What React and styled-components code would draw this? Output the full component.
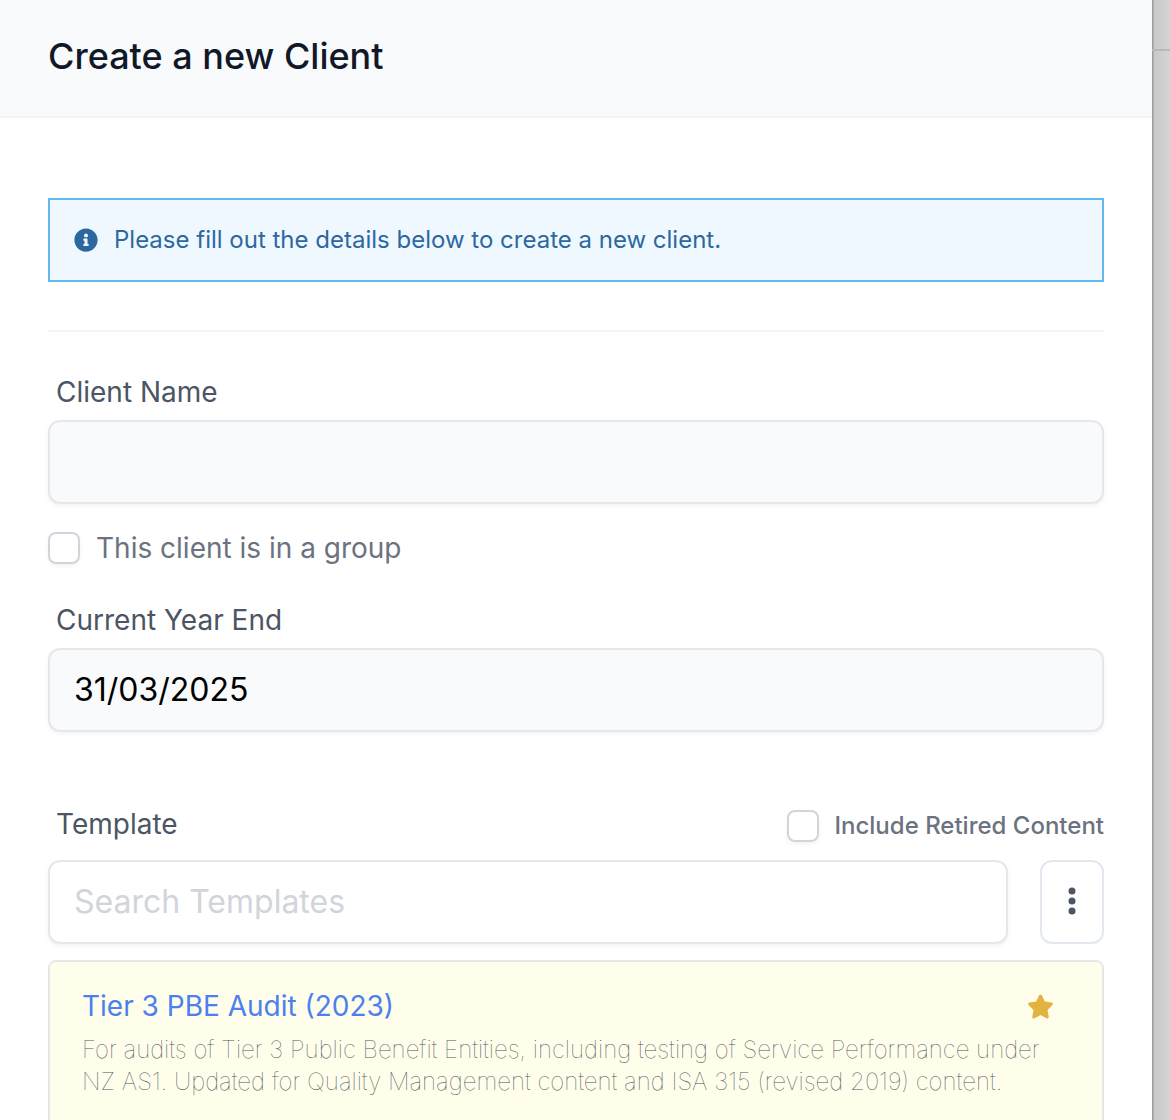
import React, {useState} from 'react';
import styled, {createGlobalStyle} from 'styled-components';
import {FaInfoCircle} from 'react-icons/fa';
import {FaStar} from 'react-icons/fa6';

const templates = [
  {
    id: 1,
    name: 'Tier 3 PBE Audit (2023)',
    description:
      'For audits of Tier 3 Public Benefit Entities, including testing of Service Performance under NZ AS1. Updated for Quality Management content and ISA 315 (revised 2019) content.',
  },
];

const App = () => {
  const [name, setName] = useState('');
  const [yearEnd, setYearEnd] = useState('31/03/2025');
  const [search, setSearch] = useState('');

  return (
    <>
      <GlobalStyle />
      <Page>
        <Panel>
          <Header>
            <h2>Create a new Client</h2>
          </Header>
          <Body>
            <Alert>
              <FaInfoCircle size={24} />
              <p>Please fill out the details below to create a new client.</p>
            </Alert>
            <Divider />
            <Label htmlFor="name">Client Name</Label>
            <Input
              id="name"
              value={name}
              onChange={(e) => setName(e.target.value)}
            />
            <GroupOption>
              <Checkbox type="checkbox" />
              <span>This client is in a group</span>
            </GroupOption>
            <Label htmlFor="yearEnd">Current Year End</Label>
            <Input
              id="yearEnd"
              value={yearEnd}
              onChange={(e) => setYearEnd(e.target.value)}
            />
            <TemplateHeader>
              <Label htmlFor="search">Template</Label>
              <RetiredOption>
                <Checkbox type="checkbox" />
                <span>Include Retired Content</span>
              </RetiredOption>
            </TemplateHeader>
            <SearchRow>
              <SearchInput
                id="search"
                placeholder="Search Templates"
                value={search}
                onChange={(e) => setSearch(e.target.value)}
              />
              <MenuButton aria-label="Options">
                <svg width="8" height="28" viewBox="0 0 8 28">
                  <circle cx="4" cy="4" r="3.5" />
                  <circle cx="4" cy="14" r="3.5" />
                  <circle cx="4" cy="24" r="3.5" />
                </svg>
              </MenuButton>
            </SearchRow>
            <TemplateList>
              {templates.map((template) => (
                <TemplateItem key={template.id}>
                  <TemplateTitle>
                    <h3>{template.name}</h3>
                    <FaStar size={27} />
                  </TemplateTitle>
                  <p>{template.description}</p>
                </TemplateItem>
              ))}
            </TemplateList>
          </Body>
        </Panel>
        <Backdrop>
          <BackdropBar />
        </Backdrop>
      </Page>
    </>
  );
};

const GlobalStyle = createGlobalStyle`
  * {
    box-sizing: border-box;
    margin: 0;
    padding: 0;
  }
  body {
    overflow: hidden;
    font-family: Inter, "Liberation Sans", sans-serif;
    -webkit-font-smoothing: antialiased;
  }
  input, button {
    font-family: inherit;
  }
`;

const Page = styled.div`
  display: flex;
  height: 1120px;
  overflow: hidden;
`;

const Panel = styled.div`
  width: 1152px;
  flex-shrink: 0;
  background: white;
`;

const Header = styled.header`
  height: 118px;
  padding: 28px 48px;
  background: #f9fafc;
  border-bottom: 2px solid #f3f4f6;
  h2 {
    font-size: 36px;
    font-weight: 500;
    line-height: 56px;
    color: #111827;
  }
`;

const Body = styled.div`
  padding: 80px 48px 0;
`;

const Alert = styled.div`
  display: flex;
  align-items: center;
  gap: 16px;
  height: 84px;
  padding: 0 24px;
  color: #2c689f;
  background: #f0f8ff;
  border: 2px solid #63b8f0;
  p {
    font-size: 24px;
    line-height: 32px;
  }
`;

const Divider = styled.hr`
  margin: 48px 0 40px;
  border: none;
  border-top: 2px solid #f3f4f6;
`;

const Label = styled.label`
  display: block;
  padding-left: 8px;
  margin-bottom: 8px;
  font-size: 28px;
  line-height: 40px;
  color: #4b5563;
`;

const Input = styled.input`
  display: block;
  width: 100%;
  height: 84px;
  padding: 0 24px 2px;
  font-size: 32px;
  color: black;
  background: #f9fafc;
  border: 2px solid #e5e7eb;
  border-radius: 12px;
  box-shadow: 0 2px 4px rgba(0, 0, 0, 0.05);
  outline: none;
`;

const SearchInput = styled(Input)`
  flex: 1;
  background: white;
  &::placeholder {
    color: #d1d5db;
  }
`;

const Checkbox = styled.input`
  appearance: none;
  width: 32px;
  height: 32px;
  flex-shrink: 0;
  background: white;
  border: 2px solid #d1d5db;
  border-radius: 8px;
  box-shadow: 0 2px 4px rgba(0, 0, 0, 0.05);
`;

const GroupOption = styled.label`
  display: flex;
  align-items: center;
  gap: 16px;
  height: 40px;
  margin: 24px 0 32px;
  font-size: 28px;
  color: #6b7280;
`;

const RetiredOption = styled.label`
  display: flex;
  align-items: center;
  gap: 15px;
  height: 32px;
  margin-top: 6px;
  font-size: 24px;
  font-weight: 500;
  color: #6b7280;
  span {
    padding-bottom: 2px;
  }
`;

const TemplateHeader = styled.div`
  display: flex;
  align-items: flex-start;
  justify-content: space-between;
  height: 56px;
  margin-top: 72px;
`;

const SearchRow = styled.div`
  display: flex;
  gap: 32px;
`;

const MenuButton = styled.button`
  display: flex;
  align-items: center;
  justify-content: center;
  width: 64px;
  height: 84px;
  padding-bottom: 2px;
  background: white;
  border: 2px solid #e2e8f0;
  border-radius: 12px;
  svg {
    fill: #4a5568;
  }
`;

const TemplateList = styled.div`
  margin-top: 16px;
  border: 2px solid #e5e7eb;
  border-radius: 8px;
  overflow: hidden;
`;

const TemplateItem = styled.div`
  height: 240px;
  padding: 24px 32px;
  background: #fffeeb;
  p {
    margin-top: 8px;
    font-size: 24px;
    font-weight: 100;
    line-height: 32px;
    color: #4b5563;
  }
`;

const TemplateTitle = styled.div`
  display: flex;
  align-items: center;
  justify-content: space-between;
  height: 40px;
  padding-right: 16px;
  h3 {
    font-size: 28px;
    font-weight: 400;
    color: #4c80f0;
  }
  svg {
    color: #e3b341;
  }
`;

const Backdrop = styled.div`
  flex: 1;
  background: linear-gradient(to right, #9c9c9c 0, #9c9c9c 1px, #c8c8c8 2px, #d5d5d5 18px);
`;

const BackdropBar = styled.div`
  height: 51px;
  border-bottom: 2px solid #b8b8b8;
`;

export default App;
